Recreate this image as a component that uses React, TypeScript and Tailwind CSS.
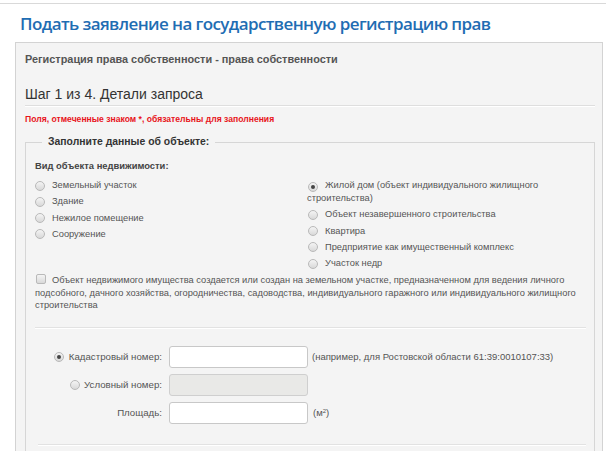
function Radio({ checked = false }: { checked?: boolean }) {
  return (
    <span className="inline-flex w-[10px] h-[10px] shrink-0 items-center justify-center rounded-full border border-[#b9b9b9] bg-gradient-to-b from-[#f4f4f4] to-[#d9d9d9] align-[-1px]">
      {checked && <span className="w-[4px] h-[4px] rounded-full bg-[#444]" />}
    </span>
  );
}

function Checkbox() {
  return (
    <span className="inline-block w-[10px] h-[10px] rounded-[2px] border border-[#b9b9b9] bg-gradient-to-b from-[#f4f4f4] to-[#d9d9d9] align-[-1px]" />
  );
}

const leftTypes = ["Земельный участок", "Здание", "Нежилое помещение", "Сооружение"];
const rightTypes = [
  "Объект незавершенного строительства",
  "Квартира",
  "Предприятие как имущественный комплекс",
  "Участок недр",
];

export default function App() {
  return (
    <div className="w-[606px] h-[451px] overflow-hidden bg-white font-['Liberation_Sans',Arial,sans-serif] text-[#555]">
      <div className="pt-[3px]">
        <div className="border-t border-[#d9d9d9]" />
      </div>

      <h1 className="pl-[20px] pt-[8px] h-[38px] font-['Open_Sans',sans-serif] font-semibold text-[17px] leading-[24px] text-[#1f6db3] tracking-[-0.6px]">
        Подать заявление на государственную регистрацию прав
      </h1>

      <div className="ml-[15px] mr-[3px] border border-[#d3d3d3] bg-[#f4f4f4] pl-[9px] pr-[7px] pb-[20px]">
        <p className="pt-[9px] text-[10.9px] leading-[14px] font-bold text-[#555]">
          Регистрация права собственности - права собственности
        </p>

        <div className="mt-[19px] pb-[2px] border-b border-[#dedede] shadow-[0_1px_0_#fff]">
          <h2 className="text-[14px] leading-[18px] text-[#333]">Шаг 1 из 4. Детали запроса</h2>
        </div>

        <p className="mt-[8px] text-[8.6px] leading-[10px] font-bold text-[#e8151b]">
          Поля, отмеченные знаком *, обязательны для заполнения
        </p>

        <fieldset className="mt-[11px] border border-[#d6d6d6] pl-[9px] pr-[8px] pb-[30px]">
          <legend className="ml-[7px] px-[6px] text-[10.4px] leading-[14px] font-bold text-[#333]">
            Заполните данные об объекте:
          </legend>

          <p className="mt-[10px] text-[9.4px] leading-[13px] font-bold text-[#444]">Вид объекта недвижимости:</p>

          <div className="mt-[7px] flex text-[9.3px] leading-[13px]">
            <div className="w-[272px] flex flex-col gap-[3.3px]">
              {leftTypes.map((t) => (
                <div key={t} className="flex items-center gap-[7px]">
                  <Radio />
                  <span>{t}</span>
                </div>
              ))}
            </div>
            <div className="w-[275px] flex flex-col gap-[3.3px]">
              <div>
                <span className="ml-[1px] mr-[7px]">
                  <Radio checked />
                </span>
                Жилой дом (объект индивидуального жилищного строительства)
              </div>
              {rightTypes.map((t) => (
                <div key={t} className="flex items-center gap-[7px] pl-[1px]">
                  <Radio />
                  <span>{t}</span>
                </div>
              ))}
            </div>
          </div>

          <p className="mt-[4px] text-[9.3px] leading-[12.5px]">
            <span className="ml-[1px] mr-[6px]">
              <Checkbox />
            </span>
            Объект недвижимого имущества создается или создан на земельном участке, предназначенном для ведения личного
            подсобного, дачного хозяйства, огородничества, садоводства, индивидуального гаражного или индивидуального
            жилищного строительства
          </p>

          <div className="mt-[15px] border-t border-[#e2e2e2] shadow-[0_1px_0_#fff]" />

          <div className="mt-[18px] flex flex-col gap-[6px] text-[9.7px] leading-[12px]">
            <div className="flex items-center">
              <label className="w-[127px] flex items-center justify-end gap-[5px]">
                <Radio checked />
                <span>Кадастровый номер:</span>
              </label>
              <input className="ml-[7px] w-[139px] h-[22px] rounded-[3px] border border-[#c8c8c8] bg-white" />
              <span className="ml-[4px] text-[9.5px]">(например, для Ростовской области 61:39:0010107:33)</span>
            </div>
            <div className="flex items-center">
              <label className="w-[127px] flex items-center justify-end gap-[4px]">
                <Radio />
                <span>Условный номер:</span>
              </label>
              <input disabled className="ml-[7px] w-[139px] h-[22px] rounded-[3px] border border-[#cfcfcf] bg-[#e9e9e7]" />
            </div>
            <div className="flex items-center">
              <label className="w-[127px] flex items-center justify-end">
                <span>Площадь:</span>
              </label>
              <input className="ml-[7px] w-[139px] h-[22px] rounded-[3px] border border-[#c8c8c8] bg-white" />
              <span className="ml-[5px] text-[9.5px]">
                (м<sup className="text-[6px]">2</sup>)
              </span>
            </div>
          </div>

          <div className="mt-[20px] ml-[3px] border-t border-[#e2e2e2] shadow-[0_1px_0_#fff]" />
        </fieldset>
      </div>
    </div>
  );
}
